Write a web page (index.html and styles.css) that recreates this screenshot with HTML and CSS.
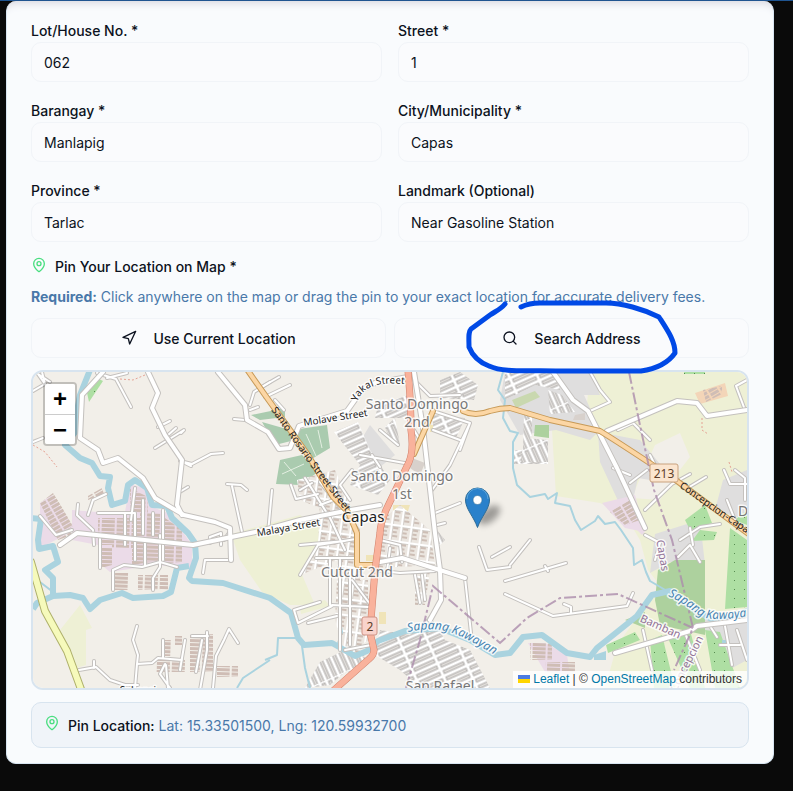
FILE: index.html
```html
<!DOCTYPE html>
<html lang="en">
<head>
<meta charset="utf-8">
<meta name="viewport" content="width=device-width, initial-scale=1">
<title>Delivery address</title>
<link rel="stylesheet" href="styles.css">
</head>
<body>
<main class="dialog">
  <form class="form">
    <div class="fields">
      <div class="field"><label for="lot">Lot/House No. *</label><input id="lot" type="text" value="062"></div>
      <div class="field"><label for="street">Street *</label><input id="street" type="text" value="1"></div>
      <div class="field"><label for="barangay">Barangay *</label><input id="barangay" type="text" value="Manlapig"></div>
      <div class="field"><label for="city">City/Municipality *</label><input id="city" type="text" value="Capas"></div>
      <div class="field"><label for="province">Province *</label><input id="province" type="text" value="Tarlac"></div>
      <div class="field"><label for="landmark">Landmark (Optional)</label><input id="landmark" type="text" value="Near Gasoline Station"></div>
    </div>

    <h2 class="map-title">
      <svg class="icon pin-icon" viewBox="0 0 24 24"><path d="M20 10c0 4.993-5.539 10.193-7.399 11.799a1 1 0 0 1-1.202 0C9.539 20.193 4 14.993 4 10a8 8 0 0 1 16 0"/><circle cx="12" cy="10" r="3"/></svg>
      Pin Your Location on Map *
    </h2>
    <p class="hint"><strong>Required:</strong> Click anywhere on the map or drag the pin to your exact location for accurate delivery fees.</p>

    <div class="actions">
      <div class="action">
        <button type="button" class="button"><svg class="icon" viewBox="0 0 24 24"><path d="M3 11 22 2l-9 19-2-8z"/></svg><span>Use Current Location</span></button>
      </div>
      <div class="action">
        <button type="button" class="button"><svg class="icon" viewBox="0 0 24 24"><circle cx="11" cy="11" r="8"/><path d="m21 21-4.300-4.300"/></svg><span>Search Address</span></button>
        <svg class="marker-ring" viewBox="462 298 220 80"><path d="M505 304C501 309 496 311 490 315L471 329C468 332 469 339 469 347C473 357 481 363 489 366C505 373 525 370 560 371H641C655 369 668 363 675 353C675 341 668 331 659 317C643 309 622 303 606 303H540C533 303 527 304 521 307"/></svg>
      </div>
    </div>

    <div class="map">
      <svg class="tiles" viewBox="33 372 714 316" preserveAspectRatio="xMidYMid slice" role="img" aria-label="Map of Capas">
        <defs>
          <pattern id="blocks" width="10" height="16" patternUnits="userSpaceOnUse" patternTransform="rotate(8)">
            <rect width="10" height="16" fill="#ebe6e0"/><path d="M3 4h5M3 8h4M3 12h5" stroke="#cdbeb5" stroke-width="2"/><path d="M0 0H10M0 0V16" stroke="#bdbab7" stroke-width="5"/><path d="M0 0H10M0 0V16" stroke="#fff" stroke-width="4"/>
          </pattern>
          <pattern id="rows" width="26" height="7" patternUnits="userSpaceOnUse" patternTransform="rotate(-24)">
            <rect width="26" height="7" fill="#e2dfdc"/><path d="M0 0H26M0 0V7M0 7H26M26 0V7" stroke="#a9a6a3" stroke-width="5"/><path d="M0 0H26M0 0V7M0 7H26M26 0V7" stroke="#fff" stroke-width="3"/>
          </pattern>
          <pattern id="lanes" width="7" height="26" patternUnits="userSpaceOnUse" patternTransform="rotate(-24)">
            <rect width="7" height="26" fill="#e2dfdc"/><path d="M0 0H7M0 0V26M7 0V26" stroke="#a9a6a3" stroke-width="5"/><path d="M0 0H7M0 0V26M7 0V26" stroke="#fff" stroke-width="3"/>
          </pattern>
          <pattern id="sheds" width="15" height="4" patternUnits="userSpaceOnUse" patternTransform="rotate(2)">
            <rect width="13" height="3" fill="#cfbdb5"/>
          </pattern>
          <pattern id="sheds-tilt" width="11" height="4" patternUnits="userSpaceOnUse" patternTransform="rotate(-30)">
            <rect width="9" height="3" fill="#cfbdb5"/>
          </pattern>
          <pattern id="orchard" width="10" height="9" patternUnits="userSpaceOnUse">
            <rect width="10" height="9" fill="#aedfa3"/><rect x="4" y="4" width="1" height="1" fill="#568b50"/>
          </pattern>
          <g id="lanes-small">
            <path d="M33 391L45 384L38 374M45 384L42 372M38 374L50 382M33 442L43 438"/>
            <path d="M97 373L116 379L131 407M107 378L127 373"/>
            <path d="M158 427L170 421M155 448L184 430L181 433M168 435L176 428M180 461L192 464L211 454L223 453M181 461L191 466"/>
            <path d="M227 484L241 485L247 490M232 486L242 532M178 493L188 487M245 420L234 419M250 410L258 407M250 405L254 392L270 382"/>
            <path d="M78 504L77 515L93 530L94 545M106 494L93 500L88 515M98 513H135V560M125 513V545M143 500V534M153 513V535M163 510V560M135 488L131 520"/>
            <path d="M113 590V570L124 565L142 567L160 562L177 567M160 535V567L153 578V590M145 540V566M100 535V568M40 516L56 535L72 530"/>
            <path d="M231 560H205L203 573M210 543V537L221 533V545M229 533L224 540"/>
            <path d="M137 626L133 640L138 655L137 664L135 688M137 664L152 663L158 658L182 660M163 657V640M185 640L180 670M207 632V650L200 690M192 636H208M216 656L224 640L229 629L238 643M216 656L213 688M202 640L196 672M166 665L168 688M79 670L96 667L110 680L125 685H138M94 661V668M165 664L160 674L170 688"/>
            <path d="M260 388L279 377M265 397L290 385M275 400L284 410M291 485L296 499L318 494M272 490L268 533M300 490L312 483M320 505L336 499"/>
            <path d="M305 478L330 518L345 550M320 482L358 530M352 470L340 485L350 500M360 455L410 464M372 455L380 467M380 430L398 445"/>
            <path d="M433 411L470 423L450 465L432 490M470 423L460 450M433 430L460 440M414 430L420 440M435 513L460 503M437 525L445 523M414 380L430 396L460 395"/>
            <path d="M300 545L345 541M300 575L318 545L356 539M316 558H355M330 560V605M340 560V650M350 570V645M332 605L368 607M320 602L294 610L298 623L332 606M308 623L337 616M345 650L371 645M352 580L370 604M374 570L400 573L435 571M380 540L400 545L402 562M415 575L420 603M422 575L425 600M390 548L387 571"/>
            <path d="M465 578L471 633M479 547L487 570L510 567M492 557L510 547M505 594L553 616L627 606L633 593M564 604L571 607V613M505 581L566 563M545 566L548 571M510 565L530 540"/>
            <path d="M618 430L633 423L650 440M590 411L610 402L600 390L590 372M650 455L660 475M647 470L630 483M677 481L686 489L706 477M645 510L672 484L690 474M630 475L613 468M735 470L745 478V500M724 470L730 484H747M727 500L735 520"/>
            <path d="M645 535L660 543L655 560M680 540L700 527L720 524M678 557L690 545L700 562M690 528L693 545"/>
            <path d="M643 630L652 670M685 633L700 670M710 626L717 637M725 626L732 665M720 645H740M737 630L747 660M747 380L736 386L745 410"/>
          </g>
          <g id="lanes-main">
            <path d="M103 372L82 395L80 438L98 450L103 463L118 458L143 478L155 498L177 511L184 515L215 522L230 528L231 560"/>
            <path d="M148 372L158 393L152 408L165 435L182 460L177 505L182 515"/>
            <path d="M218 372L245 405L247 420L268 432L279 449L290 448L299 426L347 411L362 390L375 383L408 377"/>
            <path d="M60 545L77 533L193 545L260 531L300 520L345 511L380 505"/>
            <path d="M607 431L677 401L697 403L707 416L747 410"/>
            <path d="M553 372L573 400L588 411L617 468L645 528"/>
            <path d="M414 372L423 428L435 533L440 570L441 600L430 620"/>
            <path d="M380 562L402 558L465 578"/>
            <path d="M615 653L690 631L697 626L747 620"/>
          </g>
          <path id="trunk" d="M408 370C409 385 411 400 411 430Q414 450 409 462L386 510Q380 525 380 533L375 570L370 632L374 650Q374 655 369 659L334 690"/>
          <g id="primary">
            <path d="M246 368L265 395L308 455L333 497L348 512L357 533V565H374"/>
            <path d="M414 454L433 411"/>
            <path d="M463 411Q475 417 490 411Q500 408 510 408L550 420L600 431Q615 440 677 481L750 535"/>
          </g>
          <path id="motorway" d="M31 562L45 611L67 651L82 692"/>
        </defs>

        <rect x="33" y="372" width="714" height="316" fill="#f2efe9"/>

        <g class="fields-green">
          <path d="M590 372H747V688H605L617 645L650 600L665 592L648 570L640 540L625 515L600 503L556 496L552 430L585 425Z"/>
          <path d="M231 534L300 515L345 545L300 570L315 605L290 605L262 592L240 560Z"/>
          <path d="M60 630L80 605L92 628L86 630V665L76 668Z"/>
          <path d="M300 608L325 600L330 606L301 614Z"/>
        </g>
        <path fill="#f2efe9" d="M655 445L680 433L690 457L672 480L660 500L632 498L640 478Z"/>
        <g fill="#dfdede">
          <path d="M505 372H590L600 395L584 395L600 430L590 440L556 430L520 435L500 400Z"/>
          <path d="M598 432L640 440L665 470L650 480L638 478L633 500L620 505L600 462Z"/>
          <path d="M655 534L700 520L705 565L670 562L650 573Z"/>
          <path d="M723 480L747 470V520L715 510Z"/>
          <path d="M700 620L747 610V660L725 672Z"/>
          <path d="M370 425L395 455L370 475L355 450Z"/>
        </g>
        <g fill="#ebdbe8">
          <path d="M40 503L52 495L75 530L40 548Z"/>
          <path d="M97 512H125L130 484L150 490L155 508L170 514L192 545V568L155 565L110 572L98 562V545L72 540V510Z"/>
          <path d="M602 503L635 495L645 532L625 528Z"/>
          <path d="M528 643H545L567 655L570 675L545 672Z"/>
          <path d="M635 528H648L642 535Z"/>
        </g>
        <path fill="#f3d5b8" d="M695 393L725 383L728 396L700 404Z"/>
        <g fill="#aacbaf">
          <path d="M251 415L285 408V417L260 420ZM262 422L290 430L295 440L275 445ZM292 430L327 425L330 448L310 460L302 450ZM280 460L302 455L318 472L300 485L276 484Z"/>
          <path fill="#add19e" d="M658 570L675 560H705V635L660 625L655 600Z"/>
          <path fill="#c9d8af" d="M512 400L535 391L540 397L516 408Z"/>
          <path fill="#add19e" d="M535 425H549V438L534 436ZM625 620L645 612V628Z"/>
        </g>
        <path fill="none" stroke="#e4efe2" d="M306 434L316 456M318 430L322 448M284 462L296 476M282 474L304 464"/>
        <g fill="url(#orchard)">
          <path d="M86 388L95 377L103 381L89 402Z"/><path d="M685 520L705 505L712 523L690 530Z"/>
          <path d="M730 528L747 540V607L725 609ZM700 530L717 532L714 540L692 541Z"/>
          <path d="M606 645L635 632L640 640L608 653ZM650 640L662 635L675 688H654ZM667 636L690 630L705 688H690ZM705 630L720 632L740 688H715Z"/>
          <path d="M684 372H705V374H684ZM735 520L747 525V510Z"/>
        </g>
        <path fill="#f0e4b8" d="M393 505H410L405 520L393 517ZM379 612H386V624H379ZM430 425H440V432H430ZM366 555H386V561H366Z"/>
        <path fill="#d8d1cc" d="M412 458L425 463L420 475L410 468ZM575 415L585 413V420H573Z"/>

        <g fill="url(#sheds)">
          <path d="M98 518H140V545H98ZM130 488L148 497V515L130 510ZM140 513H163V560L132 565V548H101V568L112 565V545H140ZM165 518L182 530V562L165 564Z"/>
          <path d="M113 573H129V590H113ZM138 575H168V590H138ZM190 634H213V672H190ZM156 660H185V672H156ZM165 640H172V656H165ZM175 636H182V645H175ZM217 666H238V677H217Z"/>
          <path d="M530 643H552V660H530ZM545 662H575V672H545Z"/>
        </g>
        <path fill="url(#sheds-tilt)" d="M40 503L53 493L74 525L68 530L55 534ZM88 496L102 488L104 494L88 500ZM55 535L68 528L72 535L58 540ZM610 512L630 500L640 520L625 525ZM703 390L722 386V394L706 402Z"/>

        <g class="streets">
          <path fill="url(#blocks)" d="M297 480L335 470L350 505L330 512L300 500ZM320 500L350 510L360 560V655H345L335 620L338 560L300 575L318 545ZM382 520L400 505L430 530L435 565L378 568ZM360 580H368V640L348 655ZM415 570H430L425 605H415Z"/>
          <path fill="url(#rows)" d="M334 432L358 422L370 450L390 480L378 495L350 485L360 465ZM512 450H548V464H512ZM440 380L460 372L478 385L474 400L440 398ZM433 415L465 418L455 440L433 430ZM505 372H555L560 390L535 385L505 400ZM378 405L408 395V418H375ZM380 630L410 635L430 615L445 640L470 650L490 688H420L400 670L375 655Z"/>
          <path fill="url(#lanes)" d="M548 390L562 395L575 412L550 414ZM524 412H532V435L523 450ZM525 438L548 440V462H520ZM385 427L395 418L400 445L390 440ZM320 662L345 650L365 655L330 685L305 688ZM433 525L445 540L435 550ZM344 650L372 660L350 680Z"/>
        </g>

        <g class="river">
          <path d="M90 370L80 395L77 411L76 431L65 445L80 458L92 463L100 476L110 477L108 488L112 505L125 501L128 485L135 480L147 488L152 505L167 506L172 518L188 533L195 543L196 558L189 578L192 581L223 583L270 598L291 613L298 638L304 645L332 643L355 656L367 651L378 641L405 631L440 628L470 640L495 655L510 653L523 637L542 635L567 653L590 657L597 648L637 616L652 595L670 591L697 611L717 622L750 610"/>
          <path d="M189 566L177 568L171 592L163 596L133 598L122 593L100 600L90 609L83 598L70 595L53 596L37 603L33 609"/>
          <path d="M30 518L41 519L38 540L39 549L53 546L58 562L45 570L53 578L53 596"/>
        </g>
        <path fill="#aad3df" d="M594 655L606 651V660H594ZM722 640H728V646H722Z"/>
        <g class="stream">
          <path d="M503 372L498 390L505 400L503 418L510 431L518 433L513 442L513 468L517 485L530 497L545 494L548 499L557 493L555 503L570 506L575 520L581 530L595 521L598 516L605 524L615 522L621 530L633 548L634 565L642 560L646 572L650 581L667 591"/>
          <path d="M270 660L243 678L237 688M297 638H278L277 655L265 660M302 646L305 668L310 688M340 622L342 632L338 643M40 582L53 592"/>
        </g>
        <path class="track" d="M33 445L45 452L57 467M120 379L133 380L145 375M702 418V430L708 434M729 462L732 472"/>

        <use href="#lanes-small" class="casing small"/><use href="#lanes-small" class="road small"/>
        <use href="#lanes-main" class="casing main"/><use href="#lanes-main" class="road main"/>
        <use href="#motorway" class="casing motorway"/><use href="#motorway" class="road motorway"/>
        <use href="#primary" class="casing primary"/><use href="#primary" class="road primary"/>
        <use href="#trunk" class="casing trunk"/><use href="#trunk" class="road trunk"/>
        <path class="boundary" d="M629 372L641 430L654 490L672 540L693 628L674 670M406 688L420 640L433 586L500 643L527 618L560 598L618 594L693 628"/>

        <g class="names suburb">
          <text x="417" y="409">Santo Domingo</text><text x="417" y="427">2nd</text>
          <text x="402" y="481">Santo Domingo</text><text x="402" y="499">1st</text>
          <text x="357" y="577">Cutcut 2nd</text><text x="440" y="691">San Rafael</text>
          <text x="743" y="516">D</text>
        </g>
        <text class="names town" x="363" y="522">Capas</text>
        <text class="names street" x="138" y="694">Sabansi</text>
        <g class="names street">
          <path id="p-yakal" fill="none" d="M357 402Q366 378 410 385"/>
          <path id="p-rosario" fill="none" d="M271 410L309 464L352 520"/>
          <path id="p-conc" fill="none" d="M679 487L710 509L780 556"/>
          <text><textPath href="#p-yakal">Yakal Street</textPath></text>
          <text transform="translate(336 421) rotate(-9)">Molave Street</text>
          <text transform="translate(289 531) rotate(-10)">Malaya Street</text>
          <text class="along"><textPath href="#p-rosario">Santo Rosario Street Street</textPath></text>
          <text class="along"><textPath href="#p-conc">Concepcion-Capas Road</textPath></text>
        </g>
        <g class="names water">
          <path id="p-river1" fill="none" d="M408 632Q433 626 452 633T496 656"/>
          <path id="p-river2" fill="none" d="M668 596Q684 603 697 614T770 612"/>
          <text><textPath href="#p-river1">Sapang Kawayan</textPath></text>
          <text><textPath href="#p-river2">Sapang Kawayan</textPath></text>
        </g>
        <g class="names district">
          <text transform="translate(659 556) rotate(80)">Capas</text>
          <text transform="translate(659 630) rotate(24)">Bamban</text>
          <text transform="translate(690 665) rotate(-63)">Concepcion</text>
        </g>
        <g class="shield">
          <rect x="650" y="464" width="28" height="18" rx="2" fill="#fbe5cf" stroke="#c9a27e"/><text x="664" y="478">213</text>
          <rect x="362" y="617" width="15" height="18" rx="2" fill="#f9d3cb" stroke="#cf9385"/><text x="370" y="631">2</text>
        </g>
        <g>
          <ellipse class="pin-shadow" cx="489" cy="515" rx="13" ry="7" transform="rotate(-38 489 515)"/>
          <path d="M477.500 527.500C474 517 465.500 509 465.500 500A12 12 0 0 1 489.500 500C489.500 509 481 517 477.500 527.500Z" fill="#2a81cb" stroke="#2e6c97"/>
          <path d="M467 499A10.500 10.500 0 0 1 488 499" fill="none" stroke="#5ba5dc"/>
          <circle cx="477.500" cy="500" r="4.500" fill="#fff" stroke="#2e6c97" stroke-width=".6"/>
        </g>
      </svg>
      <div class="zoom"><button type="button" aria-label="Zoom in">+</button><button type="button" aria-label="Zoom out">−</button></div>
      <div class="credit"><a href="#leaflet"><svg class="flag" viewBox="0 0 12 8"><path fill="#4c7be1" d="M0 0h12v4H0z"/><path fill="#ffd500" d="M0 4h12v4H0z"/></svg> Leaflet</a> | © <a href="#osm">OpenStreetMap</a> contributors</div>
    </div>

    <p class="pin-location">
      <svg class="icon pin-icon" viewBox="0 0 24 24"><path d="M20 10c0 4.993-5.539 10.193-7.399 11.799a1 1 0 0 1-1.202 0C9.539 20.193 4 14.993 4 10a8 8 0 0 1 16 0"/><circle cx="12" cy="10" r="3"/></svg>
      <span><b>Pin Location:</b> Lat: 15.33501500, Lng: 120.59932700</span>
    </p>
  </form>
</main>
</body>
</html>
```
FILE: styles.css
```css
* { box-sizing: border-box; }

body {
  margin: 0;
  padding: 0 19px 27px 6px;
  border-top: 1px solid #1f5490;
  background: #0a0a0a;
  color: #0c1220;
  font: 14px/20px Inter, "Liberation Sans", sans-serif;
}

.dialog {
  max-width: 768px;
  border: 1px solid #d8e5f1;
  border-top: 0;
  border-radius: 10px;
  background: #f9fbfd;
  box-shadow: inset 0 10px 8px -8px #d5d5de;
}

.form { padding: 17px 24px 15px; }

.fields {
  display: grid;
  grid-template-columns: 1fr 1fr;
  gap: 16px;
}

.field label {
  display: block;
  padding-top: 2px;
  line-height: 22px;
  font-weight: 500;
}

.field input {
  display: block;
  width: 100%;
  height: 40px;
  padding: 8px 12px;
  border: 1px solid #f1f4f8;
  border-radius: 10px;
  background: #fafbfd;
  color: inherit;
  font: inherit;
}

.icon {
  flex: none;
  width: 16px;
  height: 16px;
  fill: none;
  stroke: currentColor;
  stroke-width: 2;
  stroke-linecap: round;
  stroke-linejoin: round;
}

.pin-icon { color: #4ade80; }

.map-title {
  display: flex;
  gap: 8px;
  margin: 15px 0 10px;
  font-size: 14px;
  font-weight: 500;
}

.hint { margin: 0 0 11px; color: #4978a9; }
.hint strong { font-weight: 700; }

.actions { display: flex; gap: 8px; }
.action { position: relative; flex: 1; }

.button {
  display: flex;
  align-items: center;
  justify-content: center;
  gap: 16px;
  width: 100%;
  height: 40px;
  border: 1px solid #f1f4f8;
  border-radius: 10px;
  background: #fafbfd;
  color: inherit;
  font: inherit;
  font-weight: 500;
}

.button span { padding-top: 2px; }

.marker-ring {
  position: absolute;
  z-index: 2;
  top: -20px;
  left: 50%;
  width: 220px;
  height: 80px;
  margin-left: -110px;
  fill: none;
  stroke: #0049e6;
  stroke-width: 5;
  stroke-linecap: round;
  stroke-linejoin: round;
  pointer-events: none;
}

.map {
  position: relative;
  height: 320px;
  margin: 12px 0;
  overflow: hidden;
  border: 2px solid #d8e4ef;
  border-radius: 12px;
}

.tiles { display: block; width: 100%; height: 100%; }

.fields-green { fill: #eef0d5; }
.casing, .road { fill: none; stroke-linecap: round; stroke-linejoin: round; }
.road { stroke: #fff; }
.casing { stroke: #c4c1be; }
.casing.small { stroke-width: 4; }
.road.small { stroke-width: 2; }
.casing.main { stroke-width: 6; }
.road.main { stroke-width: 4; }
.casing.motorway { stroke: #aeb06a; stroke-width: 8; }
.road.motorway { stroke: #f6fabb; stroke-width: 6; }
.casing.primary { stroke: #c79a58; stroke-width: 6; }
.road.primary { stroke: #fcd6a4; stroke-width: 4; }
.casing.trunk { stroke: #d0806b; stroke-width: 7; }
.road.trunk { stroke: #f9b29c; stroke-width: 6; }
.river, .stream { fill: none; stroke: #aad3df; stroke-width: 6; stroke-linejoin: round; }
.stream { stroke-width: 2; }
.track { fill: none; stroke: #e5a294; stroke-dasharray: 2 2; }
.boundary { fill: none; stroke: #ab8cab; stroke-width: 2; stroke-dasharray: 12 3 3 3; opacity: .8; }

.names {
  font-family: "Noto Sans", sans-serif;
  text-anchor: middle;
  paint-order: stroke;
  stroke: #ffffffcc;
  stroke-width: 3px;
  stroke-linejoin: round;
}
.suburb { font-size: 14px; fill: #777; }
.town { font-size: 15px; fill: #222; }
.street { font-size: 10px; fill: #222; }
.street text, .water text { text-anchor: start; }
.street text[transform] { text-anchor: middle; }
.street path, .water path { stroke: none; }
.street .along { stroke: none; }
.water { font-size: 12px; font-style: italic; fill: #4683b0; }
.district { font-size: 11px; fill: #937398; }
.shield { font: 12px "Noto Sans", sans-serif; text-anchor: middle; fill: #5c3d28; }
.pin-shadow { fill: #000; opacity: .35; filter: blur(3px); }

.zoom {
  position: absolute;
  top: 10px;
  left: 10px;
  border: 2px solid #0003;
  border-radius: 4px;
  background-clip: padding-box;
}

.zoom button {
  display: block;
  width: 30px;
  height: 30px;
  padding: 0;
  border: 0;
  border-radius: 2px 2px 0 0;
  background: #fff;
  color: #000;
  font: bold 24px/30px "Liberation Sans", sans-serif;
}

.zoom button + button {
  border-top: 1px solid #ccc;
  border-radius: 0 0 2px 2px;
}

.credit {
  position: absolute;
  right: 0;
  bottom: 0;
  padding: 0 5px;
  background: #fffc;
  color: #333;
  font: 12px/17px "Liberation Sans", sans-serif;
}
.credit a { color: #0078a8; text-decoration: none; }
.flag { width: 12px; height: 8px; }

.pin-location {
  display: flex;
  gap: 8px;
  margin: 0;
  padding: 12px 12px 10px;
  border: 1px solid #d8e4ef;
  border-radius: 10px;
  background: #f0f4f9;
  color: #4978a9;
  line-height: 22px;
}
.pin-location b { color: #0c1220; font-weight: 500; }
```
